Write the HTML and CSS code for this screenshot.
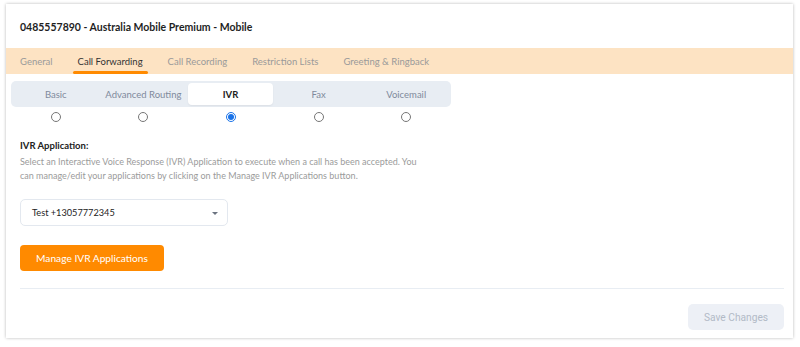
FILE: index.html
```html
<!DOCTYPE html>
<html>
<head>
<meta charset="utf-8">
<link rel="stylesheet" href="styles.css">
</head>
<body>
<div class="card">
  <div class="card-header">
    <h1 class="title">0485557890 - Australia Mobile Premium - Mobile</h1>
  </div>
  <nav class="tabs">
    <span class="tab">General</span>
    <span class="tab active">Call Forwarding</span>
    <span class="tab">Call Recording</span>
    <span class="tab">Restriction Lists</span>
    <span class="tab">Greeting &amp; Ringback</span>
  </nav>
  <div class="body">
    <div class="segment">
      <span class="seg">Basic</span>
      <span class="seg">Advanced Routing</span>
      <span class="seg active">IVR</span>
      <span class="seg">Fax</span>
      <span class="seg">Voicemail</span>
    </div>
    <div class="radios">
      <span class="radio-cell"><input type="radio" name="mode" class="radio"></span>
      <span class="radio-cell"><input type="radio" name="mode" class="radio"></span>
      <span class="radio-cell"><input type="radio" name="mode" class="radio" checked></span>
      <span class="radio-cell"><input type="radio" name="mode" class="radio"></span>
      <span class="radio-cell"><input type="radio" name="mode" class="radio"></span>
    </div>
    <div class="section">
      <div class="label">IVR Application:</div>
      <p class="desc">Select an Interactive Voice Response (IVR) Application to execute when a call has been accepted. You can manage/edit your applications by clicking on the Manage IVR Applications button.</p>
      <div class="select">
        <span class="select-value">Test +13057772345</span>
        <span class="caret"></span>
      </div>
      <button class="btn-primary">Manage IVR Applications</button>
    </div>
    <div class="divider"></div>
    <div class="footer">
      <button class="btn-save">Save Changes</button>
    </div>
  </div>
</div>
</body>
</html>
```
FILE: styles.css
```css
* { box-sizing: border-box; }
html, body { margin: 0; background: #ffffff; }
body {
  padding: 4px 7px 9px 6px;
  font-family: "Lato", "Noto Sans", sans-serif;
  color: #222;
}
.card {
  background: #fff;
  box-shadow: 0 0 3px rgba(0,0,0,0.28);
  height: 334px;
  display: flex;
  flex-direction: column;
}
.card-header {
  height: 44px;
  display: flex;
  align-items: center;
  padding-left: 14px;
}
.title {
  margin: 0;
  font-size: 10.5px;
  font-weight: 700;
  color: #1f1f1f;
  padding-top: 1px;
}
.tabs {
  height: 26px;
  background: #fde3c3;
  display: flex;
  gap: 15px;
  padding-left: 9px;
}
.tab {
  position: relative;
  padding: 0 5px;
  font-size: 9.5px;
  line-height: 27px;
  color: #9a9a9a;
}
.tab.active { color: #333; }
.tab.active::after {
  content: "";
  position: absolute;
  left: 0; right: 0; bottom: 0;
  height: 3px;
  border-radius: 2px;
  background: #ff8a00;
}
.body {
  flex: 1;
  display: flex;
  flex-direction: column;
  padding: 7px 9px 8px 5px;
}
.segment {
  width: 440px;
  height: 26px;
  background: #e8edf3;
  border-radius: 5px;
  padding: 2px 1px;
  display: grid;
  grid-template-columns: repeat(5, 1fr);
}
.seg {
  display: flex;
  align-items: center;
  justify-content: center;
  font-size: 9.5px;
  color: #7f8a9c;
  border-radius: 4px;
}
.seg.active {
  background: #fff;
  color: #1c1c1c;
  font-weight: 700;
  box-shadow: 0 1px 2px rgba(0,0,0,0.06);
  margin: 0 2px 0 1px;
}
.radios {
  width: 440px;
  display: grid;
  grid-template-columns: repeat(5, 1fr);
  padding: 0 1px;
  margin-top: 4px;
  height: 12px;
}
.radio-cell {
  display: flex;
  justify-content: center;
  align-items: center;
}
.radio {
  width: 10px;
  height: 10px;
  margin: 0;
  accent-color: #1a73e8;
}
.section {
  padding-left: 9px;
  margin-top: 16px;
}
.label {
  font-size: 9.5px;
  font-weight: 700;
  color: #222;
  line-height: 14px;
}
.desc {
  margin: 2px 0 0;
  font-size: 9px;
  line-height: 14px;
  color: #9b9b9b;
  max-width: 400px;
}
.select {
  margin-top: 16px;
  width: 208px;
  height: 27px;
  border: 1px solid #e3e8ef;
  border-radius: 5px;
  display: flex;
  align-items: center;
  justify-content: space-between;
  padding: 0 9px 0 11px;
  font-size: 9.2px;
  color: #222;
}
.caret {
  width: 0; height: 0;
  border-left: 3.5px solid transparent;
  border-right: 3.5px solid transparent;
  border-top: 3.5px solid #6b7380;
  margin-top: 1px;
}
.btn-primary {
  display: block;
  margin-top: 19px;
  width: 144px;
  height: 26px;
  border: 0;
  border-radius: 4px;
  background: #ff8a00;
  color: #fff;
  font-family: inherit;
  font-size: 10.2px;
  padding: 0;
}
.divider {
  margin: 17px 0 0 9px;
  height: 1px;
  background: #e8edf3;
}
.footer {
  display: flex;
  justify-content: flex-end;
  margin-top: 15px;
}
.btn-save {
  width: 96px;
  height: 26px;
  border: 0;
  border-radius: 5px;
  background: #edf0f6;
  color: #b2bac6;
  font-family: "Roboto", "Lato", sans-serif;
  font-size: 10.2px;
  padding: 0;
}
```
